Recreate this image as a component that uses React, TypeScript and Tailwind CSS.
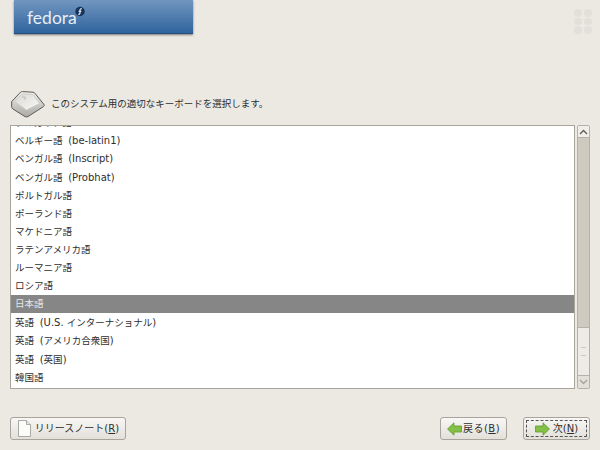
const rows = [
  "ブルガリア語",
  "ベルギー語 (be-latin1)",
  "ベンガル語 (Inscript)",
  "ベンガル語 (Probhat)",
  "ポルトガル語",
  "ポーランド語",
  "マケドニア語",
  "ラテンアメリカ語",
  "ルーマニア語",
  "ロシア語",
  "日本語",
  "英語 (U.S. インターナショナル)",
  "英語 (アメリカ合衆国)",
  "英語 (英国)",
  "韓国語",
];

function Label({ text }: { text: string }) {
  const i = text.indexOf(" ");
  if (i < 0) return <span className="text-[9.5px]">{text}</span>;
  const rest = text.slice(i + 1).split(/([^\x00-\x7f]+)/);
  return (
    <span className="whitespace-pre">
      <span className="text-[9.5px] mr-[2.5px]">{text.slice(0, i)}</span>{" "}
      {rest.map((part, k) =>
        /[^\x00-\x7f]/.test(part) ? (
          <span key={k} className="text-[9.5px]">{part}</span>
        ) : (
          <span key={k}>{part}</span>
        )
      )}
    </span>
  );
}

function Key() {
  return (
    <svg width="34" height="27" viewBox="0 0 34 27" className="shrink-0">
      <defs>
        <linearGradient id="keyTop" x1="0" y1="0" x2="1" y2="1">
          <stop offset="0" stopColor="#d9d8d4" />
          <stop offset="1" stopColor="#f8f8f6" />
        </linearGradient>
        <linearGradient id="keySide" x1="0" y1="0" x2="0" y2="1">
          <stop offset="0" stopColor="#f0efec" />
          <stop offset="1" stopColor="#a9a8a3" />
        </linearGradient>
      </defs>
      <path d="M.7 10.5 L9.5 1.2 Q10.3 .5 11.5 .6 L22 1.2 Q23 1.3 23.8 2.2 L33 13.5 Q33.6 14.8 32.4 15.6 L17 25.6 Q15.6 26.4 14 25.6 L1.6 17.8 Q.6 17 .6 15.6Z" fill="url(#keySide)" stroke="#5c5a55" strokeWidth="1" />
      <path d="M3.5 10.5 L11 3 L22 3.5 L28.5 12.5 L15.5 19 Z" fill="url(#keyTop)" stroke="#c9c8c3" strokeWidth="0.7" />
      <path d="M11 6 L14 6 L14 9" fill="none" stroke="#b5b4af" strokeWidth="0.8" />
    </svg>
  );
}

function Doc() {
  return (
    <svg width="15" height="17" viewBox="0 0 15 17">
      <path d="M1.5 .5 H9.5 L13.5 4.5 V16.5 H1.5Z" fill="#fbfbfa" stroke="#a8a8a4" />
      <path d="M9.5 .5 V4.5 H13.5" fill="#e6e6e2" stroke="#a8a8a4" />
    </svg>
  );
}

function Arrow({ dir }: { dir: "l" | "r" }) {
  return (
    <svg width="15" height="14" viewBox="0 0 15 14" style={{ transform: dir === "r" ? "scaleX(-1)" : undefined }}>
      <path d="M.5 7 L7 .8 V4 H14.5 V10 H7 V13.2Z" fill="#84c046" stroke="#5f9a2c" strokeWidth="0.8" />
    </svg>
  );
}

function Chevron({ up }: { up: boolean }) {
  return (
    <svg width="9" height="6" viewBox="0 0 9 6">
      <path d={up ? "M1 5 L4.5 1.5 L8 5" : "M1 1 L4.5 4.5 L8 1"} fill="none" stroke={up ? "#5f5c56" : "#a5a29a"} strokeWidth="1.4" />
    </svg>
  );
}

const btn = "h-[23px] flex items-center justify-center rounded-[3px] border border-[#a8a49b] bg-gradient-to-b from-[#f8f7f5] to-[#e3e0da] text-[#2e2e2e]";

export default function App() {
  return (
    <div className="w-[600px] h-[450px] flex flex-col bg-[#ece9e3] overflow-hidden text-[10px] text-[#2e2e2e] [font-family:'DejaVu_Sans','Noto_Sans_CJK_JP',sans-serif]">
      <div className="h-[89px] shrink-0 flex justify-between items-start pl-[14px] pr-[8px]">
        <div className="w-[179px] h-[34px] bg-gradient-to-b from-[#7196c0] to-[#2f649d] border-b border-[#28507c] shadow-[0_1px_2px_#777] pl-[13px] flex items-start">
          <span className="text-[17.5px] leading-none text-[#e8eef5] mt-[9px] [font-family:'Lato',sans-serif]">fedora</span>
          <svg width="10" height="11" viewBox="0 0 11 11" className="mt-[6px] -ml-[2px]">
            <circle cx="5.5" cy="5.5" r="5.2" fill="#16335c" />
            <path d="M7.5 2.5 Q5.5 2 5.5 4 V7 Q5.5 8.8 3.5 8.5 M4 5.3 H7" fill="none" stroke="#fff" strokeWidth="1.2" />
          </svg>
        </div>
        <div className="grid grid-cols-2 gap-x-[2px] gap-y-[1px] mt-[9px]">
          {[0, 1, 2, 3, 4, 5].map((i) => (
            <div key={i} className="w-[8px] h-[7.5px] rounded-full bg-[#e3e0da]" />
          ))}
        </div>
      </div>

      <div className="h-[36px] shrink-0 flex items-center pl-[11px] pb-[6px] gap-[6px] text-[#2e2e2e]">
        <Key />
        <span className="text-[9.5px]">このシステム用の適切なキーボードを選択します。</span>
      </div>

      <div className="h-[264px] shrink-0 flex px-[10px]">
        <div className="w-[565px] border border-[#a9a59c] bg-white overflow-hidden">
          <div className="-mt-[10px]">
            {rows.map((r, i) => (
              <div
                key={r}
                className={
                  (i === 0 ? "h-[15px]" : r.includes(" ") ? "h-[18.67px]" : "h-[18px]") +
                  " flex items-center pl-[4px] " +
                  (r === "日本語" ? "bg-[#868686] text-[#e6e6e6]" : "")
                }
              >
                <Label text={r} />
              </div>
            ))}
          </div>
        </div>
        <div className="w-[13px] ml-[2px] flex flex-col bg-[#cfcabf] border border-[#b5b1a8] rounded-[2px]">
          <div className="h-[12px] shrink-0 flex items-center justify-center bg-[#f0eee9] border-b border-[#b5b1a8]">
            <Chevron up />
          </div>
          <div className="flex-1 flex flex-col justify-end">
            <div className="h-[49px] bg-[#eeebe6] border-t border-b border-[#b5b1a8] flex items-center justify-center">
              <div className="w-[5px] h-[9px] border-y border-[#cfcabf]" />
            </div>
          </div>
          <div className="h-[12px] shrink-0 flex items-center justify-center bg-[#e3e0d9]">
            <Chevron up={false} />
          </div>
        </div>
      </div>

      <div className="flex-1 flex justify-between items-start px-[10px] pt-[28px]">
        <div className={btn + " w-[116px] gap-[3px]"}>
          <Doc />
          <span>リリースノート(<u>R</u>)</span>
        </div>
        <div className="flex gap-[16px]">
          <div className={btn + " w-[67px] gap-[1px]"}>
            <Arrow dir="l" />
            <span className="tracking-[0.5px]">戻る(<u>B</u>)</span>
          </div>
          <div className={btn + " w-[67px] gap-[3px] relative"}>
            <div className="absolute inset-[2px] border border-dashed border-[#555]" />
            <Arrow dir="r" />
            <span>次(<u>N</u>)</span>
          </div>
        </div>
      </div>
    </div>
  );
}
